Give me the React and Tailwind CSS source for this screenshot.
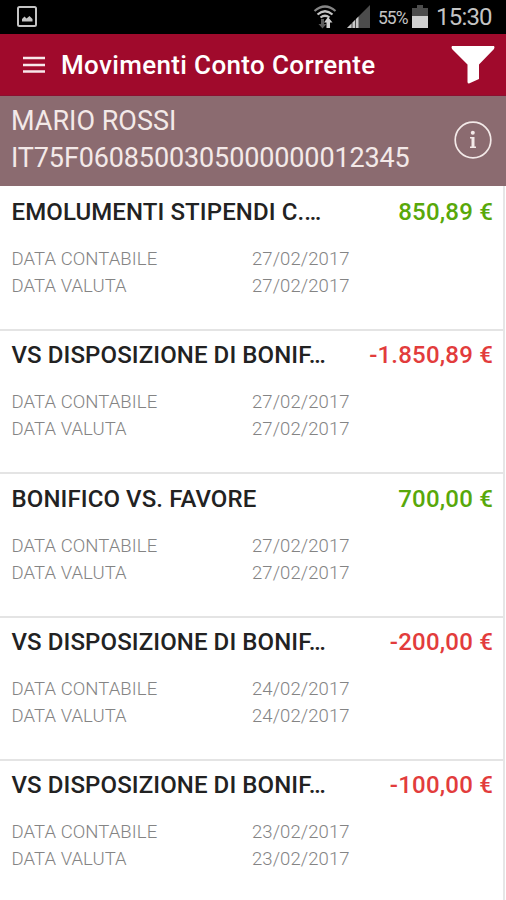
function StatusBar() {
    return (
        <div className="h-[34px] bg-black flex items-center pl-[17px] pr-[14px] text-[#c4c4c4]">
            <svg width="20" height="21" viewBox="0 0 20 21" className="mt-[-2px]">
                <rect x="1" y="1" width="18" height="19" rx="1.500" fill="none" stroke="#c4c4c4" strokeWidth="2" />
                <path d="M5 15.500V13L7.500 10.500L9.500 12.500L12.500 10L15.500 13V15.500Z" fill="#c4c4c4" />
            </svg>
            <div className="flex-1" />
            <svg width="24" height="24" viewBox="0 0 24 24" className="mr-[10px] mt-[-1px]">
                <path d="M1.500 6Q12 -3 22.500 6" fill="none" stroke="#858585" strokeWidth="2.200" />
                <path d="M4.500 9.500Q12 3 19.500 9.500" fill="none" stroke="#c4c4c4" strokeWidth="2.200" />
                <path d="M7.500 12.500Q12 9 16.500 12.500" fill="none" stroke="#c4c4c4" strokeWidth="2.200" />
                <path d="M8 14h3v5h2.500l-4 4.500L5.500 19H8z" fill="#5c5c5c" />
                <path d="M15 12l4.500 5.500h-2.500V23h-3.500v-5.500H11z" fill="#d0d0d0" />
            </svg>
            <svg width="23" height="23" viewBox="0 0 23 23" className="mr-[8px] mt-[-1px]">
                <path d="M23 0V23H0Z" fill="#4c4c4c" />
                <path d="M0 23L4.500 18.500V23ZM5.500 17.500L8 15V23H5.500ZM9 14L11.500 11.500V23H9Z" fill="#c8c8c8" />
            </svg>
            <span className="w-[30px] text-[17.500px] leading-[24px] tracking-[-1px] whitespace-nowrap pt-[1px]">55%</span>
            <svg width="16" height="23" viewBox="0 0 16 23" className="ml-[4px] mr-[8px] mt-[-1px]">
                <path d="M5 0h6v3h5v20H0V3h5z" fill="#4c4c4c" />
                <path d="M0 11h16v12H0z" fill="#d0d0d0" />
            </svg>
            <span className="text-[24px] w-[56px] whitespace-nowrap tracking-[-0.8px]">15:30</span>
        </div>
    )
}

function Header() {
    return (
        <header className="h-[62px] bg-[#a00a2c] flex items-center pl-[23px] pr-[11px] text-white border-b border-[#8c1030]">
            <svg width="22" height="18" viewBox="0 0 22 18" className="mr-[16px] mt-[1px]">
                <path d="M0 2h22M0 9h22M0 15.500h22" stroke="#f8e8ea" strokeWidth="2.700" />
            </svg>
            <h1 className="flex-1 pt-[1px] text-[26px] font-medium tracking-[0.35px] whitespace-nowrap">Movimenti Conto Corrente</h1>
            <svg width="44" height="38" viewBox="0 0 44 38">
                <path d="M1 0H43Q44 1 43 3L28 18.500V33L18 37.500Q16.500 37.500 16.500 36V18.500L1 3Q0 1 1 0Z" fill="#fff" />
            </svg>
        </header>
    )
}

function Account() {
    return (
        <section className="h-[90px] bg-[#8b6b70] flex justify-between pl-[11px] pr-[14px] text-[#f3e9e8]">
            <div className="pt-[7px] text-[27px] leading-[37px] whitespace-nowrap">
                <p className="tracking-[0px]">MARIO ROSSI</p>
                <p className="tracking-[-0.13px]">IT75F0608500305000000012345</p>
            </div>
            <svg width="38" height="38" viewBox="0 0 38 38" className="mt-[25px]">
                <circle cx="19" cy="19" r="17.800" fill="none" stroke="#f3e9e8" strokeWidth="1.700" />
                <circle cx="18.800" cy="11.800" r="2" fill="#f3e9e8" />
                <path d="M16 16h4.500v9.500H22V27H16v-1.500h1.500v-8H16z" fill="#f3e9e8" />
            </svg>
        </section>
    )
}

function Movement({ title, amount, date }) {
    const color = amount.startsWith('-') ? 'text-[#e23c3c]' : 'text-[#58a80a]'

    return (
        <li className="h-[143.4px] pl-[11.5px] pr-[10px] pt-[10.1px] border-b-2 border-[#e4e4e4]">
            <div className="flex justify-between text-[24px] leading-[28px] font-medium whitespace-nowrap">
                <h2 className="text-[#222222] tracking-[0.1px]">{title}</h2>
                <span className={`tracking-[0.2px] ${color}`}>{amount}</span>
            </div>
            <dl className="mt-[20px] grid grid-cols-[240.5px_1fr] text-[18.5px] leading-[27px] font-light tracking-[0.08px] text-[#848484]">
                <dt>DATA CONTABILE</dt>
                <dd>{date}</dd>
                <dt>DATA VALUTA</dt>
                <dd>{date}</dd>
            </dl>
        </li>
    )
}

export default function App() {
    const movements = [
        {id: 1, title: 'EMOLUMENTI STIPENDI C.…', amount: '850,89 €', date: '27/02/2017'},
        {id: 2, title: 'VS DISPOSIZIONE DI BONIF…', amount: '-1.850,89 €', date: '27/02/2017'},
        {id: 3, title: 'BONIFICO VS. FAVORE', amount: '700,00 €', date: '27/02/2017'},
        {id: 4, title: 'VS DISPOSIZIONE DI BONIF…', amount: '-200,00 €', date: '24/02/2017'},
        {id: 5, title: 'VS DISPOSIZIONE DI BONIF…', amount: '-100,00 €', date: '23/02/2017'},
    ]

    return (
        <div className="w-[506px] h-[900px] overflow-hidden bg-white font-[Roboto,sans-serif]">
            <StatusBar />
            <Header />
            <Account />
            <ul className="w-[505px] pt-[1.7px] border-r-2 border-[#e6e6e6]">
                {movements.map(movement => (
                    <Movement key={movement.id} {...movement} />
                ))}
            </ul>
        </div>
    )
}
